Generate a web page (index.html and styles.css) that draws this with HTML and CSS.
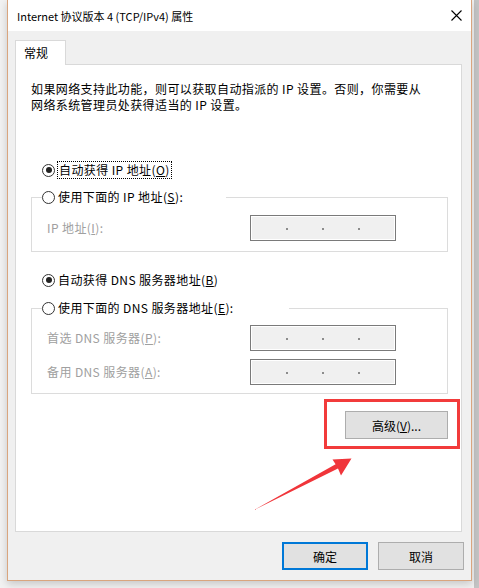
FILE: index.html
```html
<!DOCTYPE html>
<html lang="zh-CN">
<head>
  <meta charset="UTF-8" />
  <meta name="viewport" content="width=device-width, initial-scale=1.0"/>
  <title>Internet 协议版本 4 (TCP/IPv4) 属性</title>
  <link rel="stylesheet" href="styles.css">
</head>
<body>

  <div class="window">
    <div class="titlebar">
      <span class="title">Internet 协议版本 4 (TCP/IPv4) 属性</span>
      <svg class="close" width="11" height="11" viewBox="0 0 11 11">
        <path d="M0.5 0.5 L10.5 10.5 M10.5 0.5 L0.5 10.5" stroke="#000" stroke-width="1.1" fill="none"/>
      </svg>
    </div>

    <div class="dialog-body">
      <div class="tabs">
        <div class="tab">常规</div>
      </div>

      <div class="panel">
        <p class="intro">如果网络支持此功能，则可以获取自动指派的 IP 设置。否则，你需要从<br>网络系统管理员处获得适当的 IP 设置。</p>

        <div class="radio-row first">
          <span class="radio checked"></span>
          <span class="focus">自动获得 IP 地址(<u>O</u>)</span>
        </div>

        <fieldset class="group">
          <legend class="legend-ip"><span class="radio"></span>使用下面的 IP 地址(<u>S</u>):</legend>
          <div class="field">
            <span class="field-label">IP 地址(<u>I</u>):</span>
            <div class="ip-box"><i></i><i></i><i></i></div>
          </div>
        </fieldset>

        <div class="radio-row dns">
          <span class="radio checked"></span>
          <span>自动获得 DNS 服务器地址(<u>B</u>)</span>
        </div>

        <fieldset class="group group-dns">
          <legend class="legend-dns"><span class="radio"></span>使用下面的 DNS 服务器地址(<u>E</u>):</legend>
          <div class="field">
            <span class="field-label">首选 DNS 服务器(<u>P</u>):</span>
            <div class="ip-box"><i></i><i></i><i></i></div>
          </div>
          <div class="field">
            <span class="field-label">备用 DNS 服务器(<u>A</u>):</span>
            <div class="ip-box"><i></i><i></i><i></i></div>
          </div>
        </fieldset>

        <div class="advanced-row">
          <div class="highlight">
            <button class="btn btn-advanced">高级(<u>V</u>)...</button>
          </div>
        </div>
      </div>

      <div class="footer">
        <button class="btn btn-primary">确定</button>
        <button class="btn">取消</button>
      </div>
    </div>
  </div>

  <!-- annotation arrow pointing at the advanced button -->
  <svg class="arrow" width="479" height="588" viewBox="0 0 479 588">
    <polygon points="254,510 338,468.6 341,475.5 351.5,458.5 332.5,459.5 335.6,464.2" fill="#f0353a"/>
  </svg>

</body>
</html>
```

FILE: styles.css
```css
html {
  background: linear-gradient(to right, #f2f2f2 0, #f2f2f2 474px, #c4c4c4 474px);
}
body {
  margin: 0;
  width: 479px;
  height: 588px;
  overflow: hidden;
  font-family: "Noto Sans CJK SC", "Noto Sans", sans-serif;
  font-size: 12px;
  line-height: 16px;
  color: #000;
}
.window {
  width: 465px;
  margin-left: 7px;
  box-sizing: border-box;
  border: 1px solid #d9a57e;
  border-top: none;
  background-color: #f0f0f0;
  box-shadow: 0 3px 8px rgba(0,0,0,0.18);
}
.titlebar {
  height: 31px;
  display: flex;
  justify-content: space-between;
  align-items: center;
  padding: 0 9px;
  background-color: white;
}
.title {
  font-size: 11px;
}
.close {
  display: block;
}
.dialog-body {
  padding: 9px 9px 10px 7px;
}
.tabs {
  display: flex;
}
.tab {
  position: relative;
  z-index: 1;
  width: 51px;
  height: 25px;
  box-sizing: border-box;
  margin-bottom: -1px;
  padding: 4px 0 0 8px;
  background-color: white;
  border: 1px solid #d9d9d9;
  border-bottom: none;
}
.panel {
  height: 468px;
  box-sizing: border-box;
  padding: 16px 13px 0 15px;
  background-color: white;
  border: 1px solid #d9d9d9;
  letter-spacing: 0.4px;
}
.intro {
  margin: 0;
  line-height: 16px;
}
.radio-row {
  display: flex;
  align-items: center;
  gap: 3px;
  height: 16px;
  margin-left: 11px;
}
.radio-row.first {
  margin-top: 49px;
}
.radio-row.dns {
  margin-top: 20px;
}
.radio {
  display: inline-block;
  width: 13px;
  height: 13px;
  box-sizing: border-box;
  border: 1px solid #333;
  border-radius: 50%;
  background-color: white;
  vertical-align: -2px;
  margin-right: 3px;
  position: relative;
}
.radio-row .radio {
  margin-right: 0;
}
.radio.checked::after {
  content: "";
  position: absolute;
  left: 2.5px;
  top: 2.5px;
  width: 6px;
  height: 6px;
  border-radius: 50%;
  background-color: #222;
}
.focus {
  outline: 1px dotted #000;
  outline-offset: 0;
  padding: 0 1px;
}
.group {
  margin: 11px 0 0 0;
  padding: 10px 0 10px 10px;
  border: 1px solid #dcdcdc;
  min-inline-size: 0;
}
.group-dns {
  margin-top: 12px;
  padding-top: 9px;
  padding-bottom: 8px;
}
.group legend {
  margin-left: 0;
  padding: 0;
  height: 16px;
  line-height: 16px;
  background-color: white;
}
.legend-ip {
  width: 184px;
}
.legend-dns {
  width: 247px;
}
.field {
  display: flex;
  align-items: center;
}
.field + .field {
  margin-top: 8px;
}
.field-label {
  width: 203px;
  padding-left: 5px;
  color: #a0a0a0;
}
.ip-box {
  width: 146px;
  height: 26px;
  box-sizing: border-box;
  display: flex;
  justify-content: center;
  align-items: flex-end;
  gap: 34px;
  padding-bottom: 10px;
  background-color: #f0f0f0;
  border: 1px solid #7a7a7a;
  box-shadow: inset 0 0 0 1px white;
}
.ip-box i {
  width: 2px;
  height: 2px;
  background-color: #8c8c8c;
}
.advanced-row {
  display: flex;
  justify-content: flex-end;
  margin-top: 17px;
}
.highlight {
  position: relative;
}
.highlight::before {
  content: "";
  position: absolute;
  top: -12px;
  left: -21px;
  right: -12px;
  bottom: -10px;
  border: 3px solid #f23b3b;
  pointer-events: none;
}
.btn {
  font-family: inherit;
  font-size: 12px;
  color: #000;
  background-color: #e1e1e1;
  border: 1px solid #adadad;
  height: 28px;
  padding: 0;
  cursor: pointer;
}
.btn-advanced {
  width: 103px;
}
.footer {
  display: flex;
  justify-content: flex-end;
  gap: 10px;
  margin: 10px -2px 0 0;
}
.footer .btn {
  width: 86px;
}
.btn-primary {
  border: 2px solid #0078d7;
}
.arrow {
  position: absolute;
  left: 0;
  top: 0;
  pointer-events: none;
}
```
